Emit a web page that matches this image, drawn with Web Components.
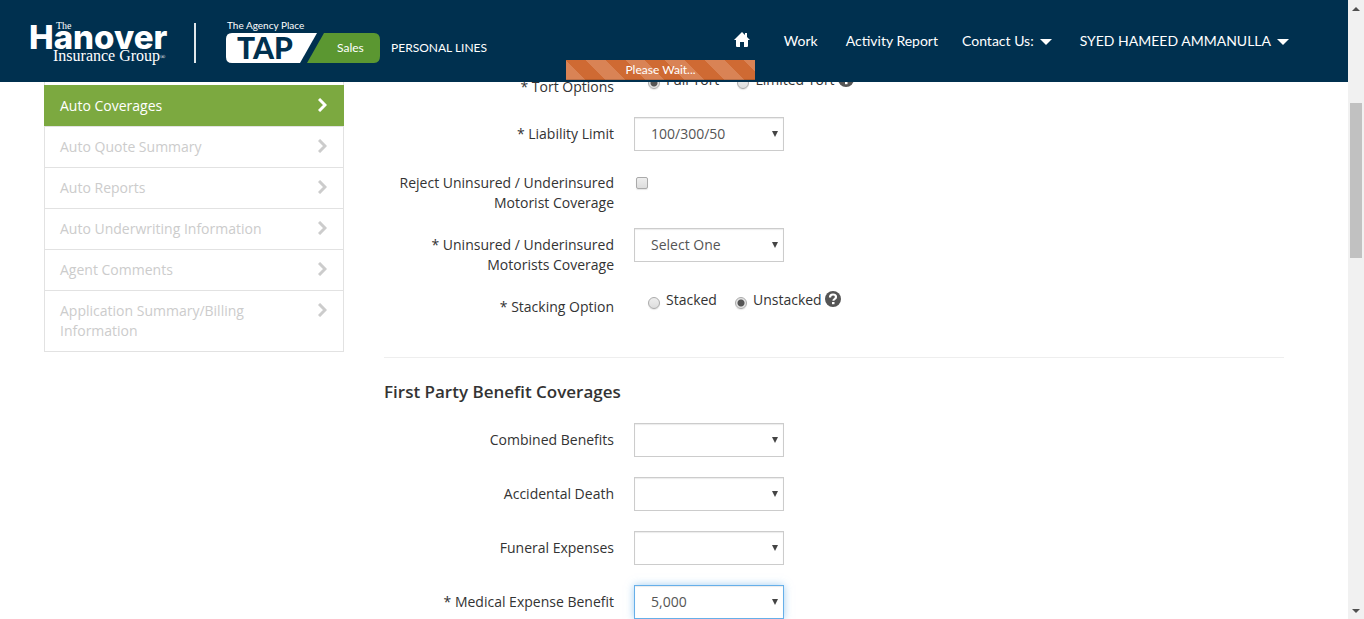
<!DOCTYPE html>
<html lang="en">
<head>
<meta charset="utf-8">
<title>Auto Coverages</title>
<style>
  html, body { margin: 0; height: 100%; }
  body { font: 14px/20px "Open Sans", Lato, sans-serif; color: #333; background: #fff; overflow: hidden; }
</style>
</head>
<body>
<app-shell>
  <site-header slot="header"></site-header>
  <side-nav slot="nav">
    <nav-step active>Auto Coverages</nav-step>
    <nav-step>Auto Quote Summary</nav-step>
    <nav-step>Auto Reports</nav-step>
    <nav-step>Auto Underwriting Information</nav-step>
    <nav-step>Agent Comments</nav-step>
    <nav-step>Application Summary/Billing Information</nav-step>
  </side-nav>
  <form-section>
    <radio-row label="* Tort Options" options="Full Tort|Limited Tort" selected="0"></radio-row>
    <select-row label="* Liability Limit" value="100/300/50"></select-row>
    <check-row label="Reject Uninsured / Underinsured Motorist Coverage"></check-row>
    <select-row label="* Uninsured / Underinsured Motorists Coverage" value="Select One"></select-row>
    <radio-row label="* Stacking Option" options="Stacked|Unstacked" selected="1"></radio-row>
  </form-section>
  <form-section heading="First Party Benefit Coverages">
    <select-row label="Combined Benefits"></select-row>
    <select-row label="Accidental Death"></select-row>
    <select-row label="Funeral Expenses"></select-row>
    <select-row label="* Medical Expense Benefit" value="5,000" current></select-row>
  </form-section>
  <scroll-rail slot="rail"></scroll-rail>
</app-shell>

<script>
class Base extends HTMLElement {
  connectedCallback() {
    if (this.shadowRoot) return;
    this.attachShadow({ mode: 'open' }).innerHTML = this.render();
  }
  attr(name) { return this.getAttribute(name) || ''; }
}

customElements.define('app-shell', class extends Base {
  render() { return `
    <style>
      :host { display: grid; grid-template-columns: minmax(0, 1fr) 16px; grid-template-rows: 82px minmax(0, 1fr); height: 100vh; }
      header { grid-area: 1 / 1 / 2 / 2; z-index: 1; }
      .page { grid-area: 1 / 1 / 3 / 2; overflow: hidden; display: grid; grid-template-columns: 300px minmax(0, 1fr); column-gap: 40px; align-items: start; padding: 70px 64px 0 44px; }
      .rail { grid-area: 1 / 2 / 3 / 3; display: grid; }
    </style>
    <header><slot name="header"></slot></header>
    <div class="page"><slot name="nav"></slot><main><slot></slot></main></div>
    <div class="rail"><slot name="rail"></slot></div>`; }
});

customElements.define('brand-logo', class extends Base {
  render() { return `
    <style>
      :host { display: block; }
      svg { display: block; overflow: visible; }
    </style>
    <svg width="460" height="46" viewBox="0 0 460 46" fill="#fff" role="img" aria-label="The Hanover Insurance Group, TAP Sales">
      <text x="25" y="9" font-family="Liberation Serif" font-size="10">The</text>
      <text x="-2" y="29" font-family="Inter" font-weight="800" font-size="33">Hanover</text>
      <text x="22" y="41" font-family="Liberation Serif" font-size="16">Insurance Group</text>
      <text x="129" y="39" font-family="Liberation Serif" font-size="7">®</text>
      <rect x="163" y="3" width="2" height="40" fill="#dfe6ea"/>
      <text x="196" y="9" font-family="Lato" font-size="10">The Agency Place</text>
      <path d="M201 13H286L269 43H201Q195 43 195 37V19Q195 13 201 13Z"/>
      <path d="M293 13H343Q349 13 349 20V36Q349 43 343 43H276Z" fill="#5b9731"/>
      <text x="206" y="39" font-family="Lato" font-weight="900" font-size="30" fill="#00304f">TAP</text>
      <text x="306" y="32" font-family="Lato" font-size="12">Sales</text>
      <text x="360" y="32" font-family="Lato" font-size="12">PERSONAL LINES</text>
    </svg>`; }
});

customElements.define('site-header', class extends Base {
  render() { return `
    <style>
      :host { display: flex; position: relative; height: 82px; box-sizing: border-box; padding: 20px 59px 0 31px; background: #00304f; color: #fff; justify-content: space-between; align-items: flex-start; font-family: Lato, sans-serif; }
      nav { display: flex; align-items: center; height: 42px; white-space: nowrap; }
      a { color: inherit; text-decoration: none; display: flex; align-items: center; gap: 6px; margin-left: 24px; }
      svg.caret { margin-top: 2px; }
      .home { margin: 0 10px 4px 0; }
      .wide { margin-left: 28px; }
      .wait { position: absolute; left: 42%; width: 14%; top: 60px; height: 20px; font-size: 12px; text-align: center;
        background: repeating-linear-gradient(45deg, #d98355 0 14px, #cf6a33 14px 28px); box-shadow: inset 0 -1px 0 rgba(0,0,0,.15); }
    </style>
    <brand-logo></brand-logo>
    <nav aria-label="Main">
      <a class="home" href="#" aria-label="Home"><svg width="16" height="15" viewBox="0 0 16 15" fill="#fff"><path d="M8 0L11 3V1H13V5L16 8H14V14Q14 15 13 15H10V10H6V15H3Q2 15 2 14V8H0Z"/></svg></a>
      <a href="#">Work</a>
      <a class="wide" href="#">Activity Report</a>
      <a href="#">Contact Us: <svg class="caret" width="12" height="6" fill="#fff"><path d="M0 0H12L6 6Z"/></svg></a>
      <a class="wide" href="#">SYED HAMEED AMMANULLA <svg class="caret" width="12" height="6" fill="#fff"><path d="M0 0H12L6 6Z"/></svg></a>
    </nav>
    <div class="wait" role="status">Please Wait...</div>`; }
});

customElements.define('side-nav', class extends Base {
  render() { return `
    <style>
      nav { display: flex; flex-direction: column; border: 1px solid #e2e2e2; border-top: 0; padding-top: 15px; }
    </style>
    <nav aria-label="Quote steps"><slot></slot></nav>`; }
});

customElements.define('nav-step', class extends Base {
  render() { return `
    <style>
      :host { display: block; color: #ccc; border-top: 1px solid #e2e2e2; }
      :host([active]) { background: #7ca940; color: #fff; border-color: #7ca940; margin: 0 -1px; padding: 0 1px; }
      a { display: flex; justify-content: space-between; align-items: flex-start; gap: 50px; padding: 10px 16px 10px 15px; color: inherit; text-decoration: none; }
      svg { flex: none; margin-top: 2px; }
    </style>
    <a href="#"><span><slot></slot></span><svg width="9" height="14" viewBox="0 0 9 14" fill="none" stroke="currentColor" stroke-width="3"><path d="M1 1L7 7L1 13"/></svg></a>`; }
});

customElements.define('form-section', class extends Base {
  render() {
    const h = this.attr('heading');
    return `
    <style>
      :host { display: block; }
      section { display: flex; flex-direction: column; gap: ${h ? 20 : 15}px; padding-bottom: ${h ? 0 : 35}px; }
      section.titled { border-top: 1px solid #eee; padding-top: 23px; }
      h2 { font-size: 17px; line-height: 22px; font-weight: 600; margin: 0; }
    </style>
    <section class="${h ? 'titled' : ''}">${h ? `<h2>${h}</h2>` : ''}<slot></slot></section>`; }
});

const rowCss = `
  :host { display: grid; grid-template-columns: 230px minmax(0, 1fr); column-gap: 20px; min-height: 32px; align-items: start; }
  .label { padding: 7px 0 0 10px; text-align: right; }
`;

customElements.define('select-row', class extends Base {
  render() { return `
    <style>${rowCss}
      .box { display: grid; width: 150px; }
      select, svg { grid-area: 1 / 1; }
      select { appearance: none; box-sizing: border-box; width: 100%; height: 34px; margin: 0; padding: 0 20px 0 16px; font: inherit; color: #555; background: #fff; border: 1px solid #ccc; border-radius: 0; box-shadow: inset 0 1px 1px rgba(0,0,0,.08); outline: 0; }
      :host([current]) select { border-color: #66afe9; box-shadow: inset 0 1px 1px rgba(0,0,0,.08), 0 0 8px rgba(102,175,233,.6); }
      svg { justify-self: end; align-self: center; margin-right: 6px; pointer-events: none; }
    </style>
    <label class="label" for="f">${this.attr('label')}</label>
    <div class="box"><select id="f"><option>${this.attr('value')}</option></select><svg width="6" height="6" fill="#444"><path d="M0 0H6L3 6Z"/></svg></div>`; }
});

const tickCss = `
  input { appearance: none; box-sizing: border-box; flex: none; width: 12px; height: 12px; border: 1px solid #aaa; background: linear-gradient(#eee, #ddd); box-shadow: 0 1px 1px rgba(0,0,0,.1); }
`;

customElements.define('check-row', class extends Base {
  render() { return `
    <style>${rowCss}${tickCss}
      input { display: block; margin: 11px 0 0 2px; border-radius: 2px; }
    </style>
    <label class="label" for="f">${this.attr('label')}</label>
    <div><input id="f" type="checkbox"></div>`; }
});

customElements.define('radio-row', class extends Base {
  render() {
    const sel = Number(this.attr('selected'));
    const items = this.attr('options').split('|').map((o, i) =>
      `<label><input type="radio" name="r"${i === sel ? ' checked' : ''}>${o}</label>`).join('');
    return `
    <style>${rowCss}${tickCss}
      .set { display: flex; padding-left: 14px; gap: 18px; }
      .set label { display: flex; gap: 6px; }
      input { margin: 7px 0 0; border-radius: 50%; }
      input:checked { background: radial-gradient(circle, #555 0 3px, #e4e4e4 4px); }
      .help { appearance: none; border: 0; padding: 0; margin: 1px 0 0 -15px; width: 16px; height: 16px; background: none; }
      .help svg { display: block; }
    </style>
    <div class="label" id="l">${this.attr('label')}</div>
    <div class="set" role="radiogroup" aria-labelledby="l">${items}
      <button class="help" type="button" aria-label="Help"><svg width="16" height="16" viewBox="0 0 16 16"><circle cx="8" cy="8" r="8" fill="#555"/><path d="M5 6.500Q5 3.500 8 3.500T11 6Q11 7.300 9.500 8.100Q8.400 8.700 8.400 9.800" fill="none" stroke="#fff" stroke-width="2.200"/><rect x="7" y="11" width="2.500" height="2.200" fill="#fff"/></svg></button>
    </div>`; }
});

customElements.define('scroll-rail', class extends Base {
  render() { return `
    <style>
      :host { display: flex; flex-direction: column; align-items: center; background: #f1f1f1; }
      svg { display: block; margin: 7px 0 6px; }
      .track { flex: 1; align-self: stretch; display: grid; grid-template-rows: 86fr 155fr 344fr; padding: 0 2px; }
      .thumb { grid-row: 2; background: #c1c1c1; }
    </style>
    <svg width="8" height="4" fill="#505050"><path d="M0 4L4 0L8 4Z"/></svg>
    <div class="track"><div class="thumb"></div></div>
    <svg width="8" height="4" fill="#505050"><path d="M0 0H8L4 4Z"/></svg>`; }
});
</script>
</body>
</html>
